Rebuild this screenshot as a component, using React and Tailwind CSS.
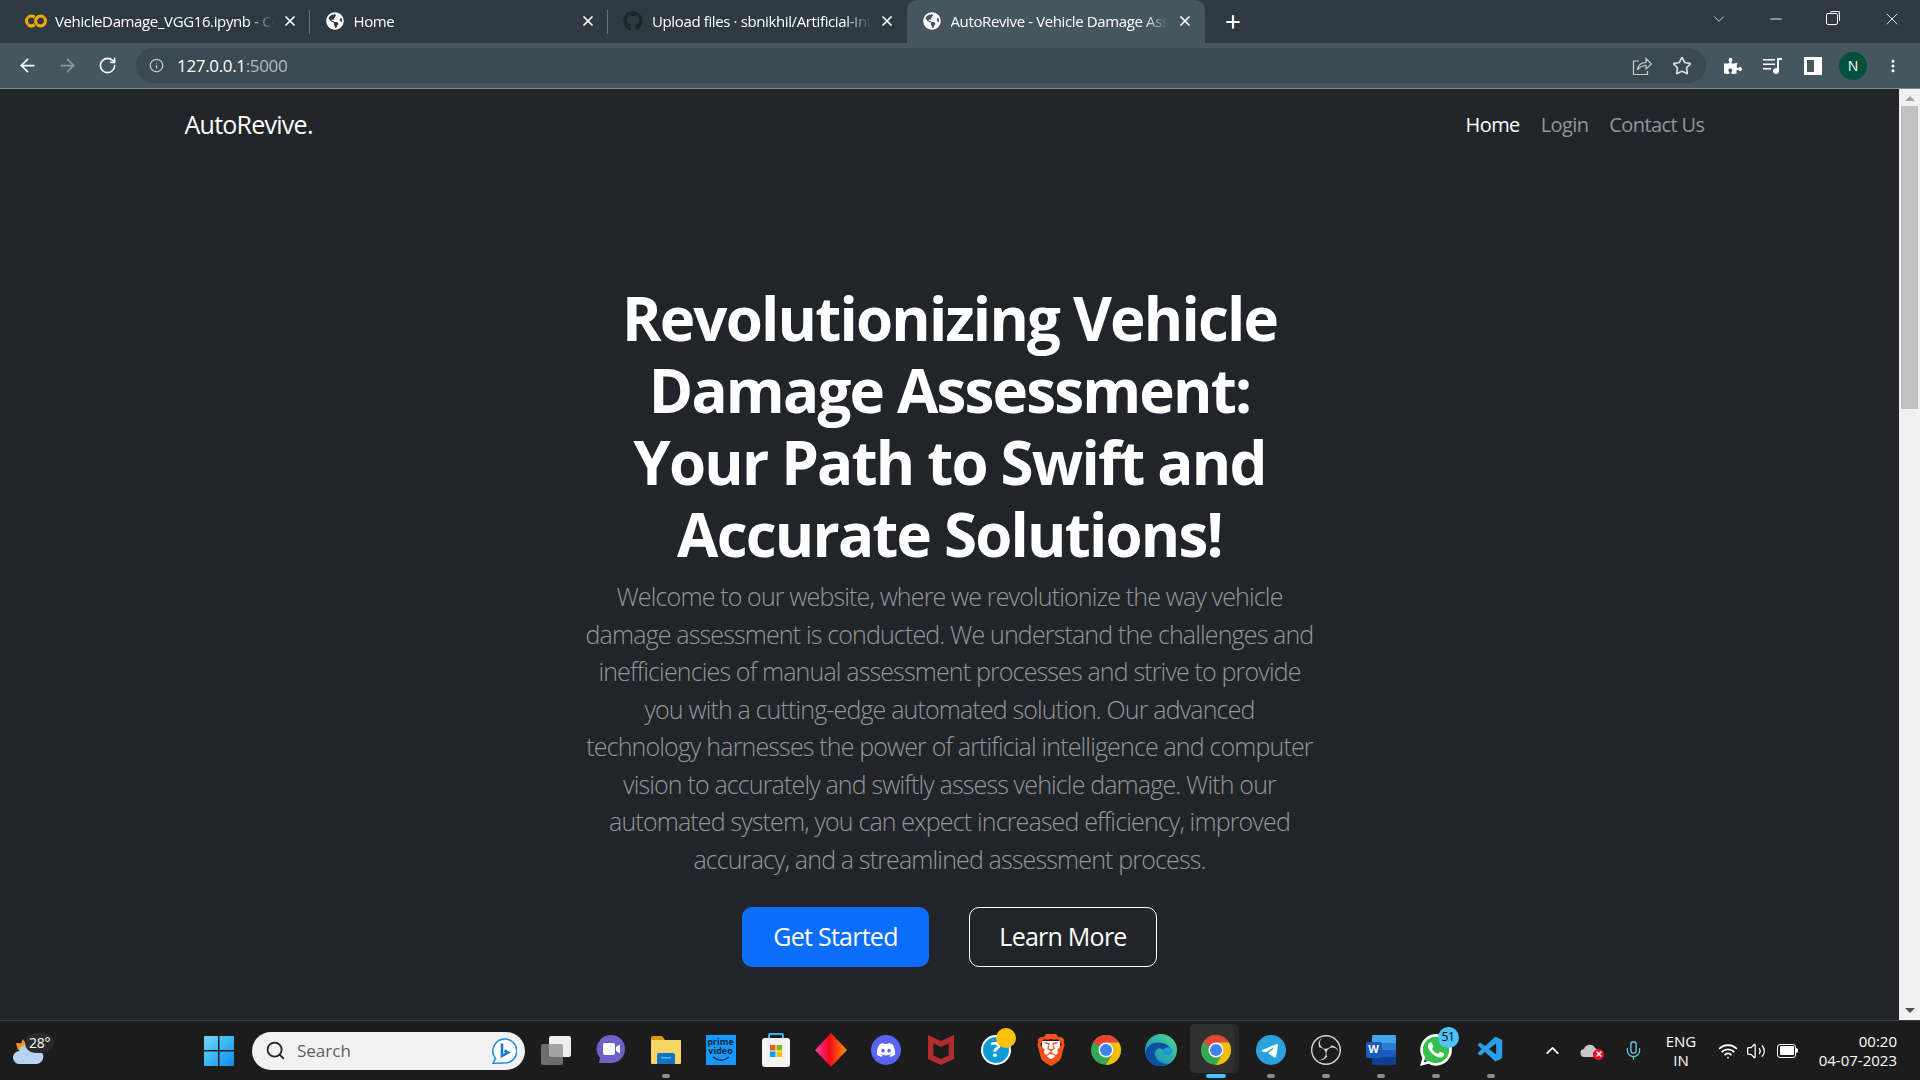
import React from 'react';
import { ArrowLeft, ArrowRight, RotateCw, Info, Star, X, Plus, ChevronDown, ChevronUp, Minus, Search, Mic, Wifi, Volume2, EllipsisVertical } from 'lucide-react';
import { FaGithub, FaGlobeAmericas, FaDiscord, FaPuzzlePiece } from 'react-icons/fa';
import { SiGooglecolab, SiBrave, SiMcafee, SiObsstudio, SiTelegram, SiWhatsapp } from 'react-icons/si';
import { VscVscode } from 'react-icons/vsc';

const tabs = [
  { id: 'colab', title: 'VehicleDamage_VGG16.ipynb - Colab' },
  { id: 'home', title: 'Home' },
  { id: 'github', title: 'Upload files · sbnikhil/Artificial-Intelligence' },
  { id: 'active', title: 'AutoRevive - Vehicle Damage Assessment', active: true },
];

const headingLines = [
  'Revolutionizing Vehicle',
  'Damage Assessment:',
  'Your Path to Swift and',
  'Accurate Solutions!',
];

const bodyLines = [
  'Welcome to our website, where we revolutionize the way vehicle',
  'damage assessment is conducted. We understand the challenges and',
  'inefficiencies of manual assessment processes and strive to provide',
  'you with a cutting-edge automated solution. Our advanced',
  'technology harnesses the power of artificial intelligence and computer',
  'vision to accurately and swiftly assess vehicle damage. With our',
  'automated system, you can expect increased efficiency, improved',
  'accuracy, and a streamlined assessment process.',
];

const TabIcon = ({ id }) => {
  if (id === 'colab') return <SiGooglecolab size={22} color="#f9ab00" />;
  if (id === 'github') return <FaGithub size={20} color="#1c252b" />;
  return <FaGlobeAmericas size={18} color="#ffffff" />;
};

const Tab = ({ tab }) => (
  <div
    className={`flex h-[43px] w-[298.5px] shrink-0 items-center pb-[1px] pl-[13px] pr-[12px] ${
      tab.active ? 'rounded-t-[10px] bg-[#46565f]' : ''
    }`}
  >
    <span className="flex w-[24px] shrink-0 items-center justify-center">
      <TabIcon id={tab.id} />
    </span>
    <span className="ml-[7px] flex-1 overflow-hidden whitespace-nowrap text-[15px] tracking-[-0.025em] text-white [mask-image:linear-gradient(to_right,black_88%,transparent)]">
      {tab.title}
    </span>
    <X size={16} strokeWidth={2.6} color="#ffffff" className="ml-2 shrink-0" />
  </div>
);

const ChromeLogo = ({ size = 36 }) => (
  <svg width={size} height={size} viewBox="0 0 48 48">
    <circle cx="24" cy="24" r="20" fill="#34a853" />
    <path d="M24 4a20 20 0 0 1 17.32 10H24a10 10 0 0 0-8.66 5L6.68 14A20 20 0 0 1 24 4z" fill="#ea4335" />
    <path d="M41.32 14A20 20 0 0 1 24 44l8.66-15A10 10 0 0 0 24 14z" fill="#fbbc04" />
    <circle cx="24" cy="24" r="10" fill="#ffffff" />
    <circle cx="24" cy="24" r="8" fill="#3f83ee" />
  </svg>
);

const TaskIcon = ({ children, dot, active }) => (
  <div className="relative flex h-[56px] w-[55px] shrink-0 items-center justify-center pb-[2px]">
    {active && <span className="absolute top-[1px] left-[2px] h-[49px] w-[49px] rounded-[5px] bg-[#282828]" />}
    {active && <span className="absolute top-[1px] left-[2px] h-[49px] w-[44px] rounded-[5px] bg-[#303030]" />}
    <span className="relative flex items-center justify-center">{children}</span>
    {dot && <span className="absolute bottom-[1px] h-[4px] w-[8px] rounded-full bg-[#8c8c8c]" />}
    {active && <span className="absolute bottom-[1px] h-[4px] w-[20px] rounded-full bg-[#4cc2ff]" />}
  </div>
);

const WindowsLogo = () => (
  <svg width="30" height="30" viewBox="0 0 30 30">
    <defs>
      <linearGradient id="winBlue" x1="0" y1="0" x2="1" y2="1">
        <stop offset="0" stopColor="#6fdcfb" />
        <stop offset="1" stopColor="#0b8bf0" />
      </linearGradient>
    </defs>
    <path d="M0 1a1 1 0 0 1 1-1h13v14H0zM15.5 0H29a1 1 0 0 1 1 1v13H15.5zM0 15.5h14V30H1a1 1 0 0 1-1-1zM15.5 15.5H30V29a1 1 0 0 1-1 1H15.5z" fill="url(#winBlue)" />
  </svg>
);

const BingIcon = () => (
  <svg width="26" height="26" viewBox="0 0 26 26">
    <path d="M14 1a12 12 0 0 1 2 23.800L2 25.500l2.500-5A12 12 0 0 1 14 1z" fill="#ffffff" stroke="#1e8fe6" strokeWidth="1.6" />
    <path d="M11 5.500v12.500l6-3.500-3.500-2" fill="none" stroke="#1878d8" strokeWidth="2.6" />
  </svg>
);

const TaskViewIcon = () => (
  <svg width="32" height="30" viewBox="0 0 32 30">
    <rect x="9" y="1" width="22" height="21" rx="2" fill="#eeeeee" />
    <rect x="1" y="9" width="22" height="21" rx="2" fill="#8a8a8a" fillOpacity="0.75" />
  </svg>
);

const MeetIcon = () => (
  <svg width="30" height="32" viewBox="0 0 30 32">
    <path d="M15 1a14 14 0 0 1 0 28H3l1-5A14 14 0 0 1 15 1z" fill="#6e62c9" />
    <rect x="7" y="9" width="12" height="12" rx="2" fill="#ffffff" />
    <path d="M20 13l4-2.500v9L20 17z" fill="#ffffff" />
  </svg>
);

const FolderIcon = () => (
  <svg width="32" height="30" viewBox="0 0 32 30">
    <path d="M1 3a2 2 0 0 1 2-2h9l3 4h15a1 1 0 0 1 1 1v3H1z" fill="#d99a0c" />
    <rect x="1" y="5" width="30" height="24" rx="1" fill="#f7d668" />
    <path d="M7 20a2 2 0 0 1 2-2h14a2 2 0 0 1 2 2v9H7z" fill="#0f74c4" />
    <rect x="11" y="22" width="10" height="1.500" fill="#5fb2ee" />
  </svg>
);

const PrimeVideo = () => (
  <div className="flex h-[30px] w-[30px] flex-col items-center bg-[#1399ff] pt-[2px] font-['Open_Sans',sans-serif] text-[9px] leading-[9px] font-bold text-[#10273d]">
    <span>prime</span>
    <span>video</span>
    <svg width="18" height="6" viewBox="0 0 18 6" className="mt-[1px]">
      <path d="M1 1c5 4 11 4 16 0" fill="none" stroke="#10273d" strokeWidth="1.400" />
    </svg>
  </div>
);

const StoreIcon = () => (
  <svg width="30" height="36" viewBox="0 0 30 36">
    <path d="M8 8V3a1 1 0 0 1 1-1h12a1 1 0 0 1 1 1v5" fill="none" stroke="#2eb4ee" strokeWidth="2" />
    <rect x="1" y="6" width="28" height="29" rx="3" fill="#f3f3f3" />
    <rect x="9" y="13" width="5.500" height="5.500" fill="#ef5a24" />
    <rect x="15.500" y="13" width="5.500" height="5.500" fill="#7fba00" />
    <rect x="9" y="19.500" width="5.500" height="5.500" fill="#00a4ef" />
    <rect x="15.500" y="19.500" width="5.500" height="5.500" fill="#ffb900" />
  </svg>
);

const DiamondIcon = () => (
  <svg width="32" height="34" viewBox="0 0 32 34">
    <defs>
      <linearGradient id="diamondFill" x1="0" y1="0" x2="1" y2="0">
        <stop offset="0" stopColor="#f23aa8" />
        <stop offset="0.45" stopColor="#f2071c" />
        <stop offset="1" stopColor="#ff9500" />
      </linearGradient>
    </defs>
    <polygon points="16,0 32,17 16,34 0,17" fill="url(#diamondFill)" />
  </svg>
);

const HelpIcon = () => (
  <div className="relative flex h-[30px] w-[30px] items-center justify-center rounded-full border-2 border-white bg-[#0f9bd7] font-['Open_Sans',sans-serif] text-[21px] font-bold text-white">
    ?
    <span className="absolute top-[-9px] right-[-7px] h-[20px] w-[20px] rounded-full bg-[#ffc20e]" />
  </div>
);

const EdgeIcon = () => (
  <svg width="32" height="32" viewBox="0 0 32 32">
    <defs>
      <linearGradient id="edgeTop" x1="0" y1="1" x2="1" y2="0">
        <stop offset="0" stopColor="#0c7ccd" />
        <stop offset="1" stopColor="#52dc8e" />
      </linearGradient>
    </defs>
    <circle cx="16" cy="16" r="16" fill="url(#edgeTop)" />
    <path d="M1 17C3 7 20 5 26 15c2 3 0 6-4 6-3 0-2-3-4-5-3-3-9-1-8 5 1 5 6 9 13 9-3 2-7 2-10 2C6 32 0 25 1 17z" fill="#0b4f9e" />
    <path d="M18 16c2 2 1 5 4 5 3 0 6-2 4-6-2-3-6-2-8 1z" fill="#1f9bd4" />
  </svg>
);

const WordIcon = () => (
  <div className="relative h-[30px] w-[30px]">
    <svg width="30" height="30" viewBox="0 0 30 30">
      <path d="M6 1a1 1 0 0 1 1-1h22a1 1 0 0 1 1 1v7H6z" fill="#41a5ee" />
      <rect x="6" y="8" width="24" height="7" fill="#2b7cd3" />
      <rect x="6" y="15" width="24" height="7" fill="#185abd" />
      <path d="M6 22h24v7a1 1 0 0 1-1 1H7a1 1 0 0 1-1-1z" fill="#103f91" />
    </svg>
    <span className="absolute top-[7px] left-0 flex h-[16px] w-[16px] items-center justify-center rounded-[2px] bg-[#185abd] font-['Open_Sans',sans-serif] text-[11px] font-bold text-white">
      W
    </span>
  </div>
);

const WeatherIcon = () => (
  <div className="relative h-[34px] w-[42px]">
    <svg width="32" height="26" viewBox="0 0 32 26" className="mt-[10px]">
      <path d="M4 4l5 .5L11 0l3 5 4 2-4 6-8-2z" fill="#f59a23" />
      <path d="M8 25a6.500 6.500 0 0 1-1-13 8.500 8.500 0 0 1 15.500-2 7.500 7.500 0 0 1 2.500 15z" fill="#b6d4f2" />
    </svg>
    <span className="absolute top-[-6px] left-[13px] rounded-full bg-[#2a2a2a] px-[4px] text-[14px] leading-[20px] tracking-[-0.02em] text-white">28°</span>
  </div>
);

const OneDriveError = () => (
  <div className="relative h-[18px] w-[24px]">
    <svg width="20" height="16" viewBox="0 0 20 16">
      <path d="M5 15a4 4 0 0 1-1-8 6 6 0 0 1 11-1 5 5 0 0 1 1 9z" fill="#c8c8c8" />
    </svg>
    <span className="absolute right-0 bottom-0 flex h-[11px] w-[11px] items-center justify-center rounded-full bg-[#e81123]">
      <X size={8} strokeWidth={4} color="#ffffff" />
    </span>
  </div>
);

const BatteryIcon = () => (
  <div className="flex items-center">
    <div className="flex h-[14px] w-[19px] items-center rounded-[3px] border-[1.5px] border-white p-[1.5px]">
      <div className="h-full w-full rounded-[1px] bg-white" />
    </div>
    <div className="h-[5px] w-[2px] rounded-r bg-white" />
  </div>
);

const SidePanelIcon = () => (
  <svg width="18" height="18" viewBox="0 0 18 18">
    <path d="M0 0h18v18H0zM3 3v12h7V3z" fill="#ffffff" fillRule="evenodd" />
  </svg>
);

const MediaIcon = () => (
  <svg width="20" height="18" viewBox="0 0 20 18">
    <path d="M0 2h12v1.600H0zM0 6.500h12v1.600H0zM0 11h8v1.600H0z" fill="#ffffff" />
    <path d="M14 1h5v2h-3v11a3 3 0 1 1-2-2.800z" fill="#ffffff" />
  </svg>
);

const ShareIcon = () => (
  <svg width="20" height="20" viewBox="0 0 20 20" fill="none" stroke="#c5cbcf" strokeWidth="1.200">
    <path d="M7 5H1.500v13.500h14V15" />
    <path d="M5.500 14c.5-5 4-7.500 8.500-7.500V2.500l5.500 5.500-5.500 5V9.500c-4 0-6.500 1.500-8.500 4.500z" />
  </svg>
);

const App = () => (
  <div className="flex h-[1080px] w-[1920px] flex-col overflow-hidden bg-[#212529] font-['Open_Sans',sans-serif]">
    {/* tab strip */}
    <div className="flex h-[43px] shrink-0 items-center bg-[#2e3a42] pl-[11px]">
      {tabs.map((tab, i) => (
        <React.Fragment key={tab.id}>
          <Tab tab={tab} />
          {i < 2 && <span className="ml-[-1px] h-[24px] w-px shrink-0 bg-[#6c767d]" />}
        </React.Fragment>
      ))}
      <Plus size={20} strokeWidth={2.6} color="#ffffff" className="ml-[18px] shrink-0" />
      <div className="mb-[6px] ml-auto flex items-center">
        <span className="flex w-[57px] justify-center"><ChevronDown size={18} strokeWidth={1} color="#ffffff" /></span>
        <span className="flex w-[56px] justify-center"><Minus size={18} strokeWidth={1.2} color="#ffffff" /></span>
        <span className="mr-[2.5px] flex w-[57px] justify-center">
          <span className="relative h-[12px] w-[12px] rounded-[2px] border border-white">
            <span className="absolute top-[-3px] right-[-3px] h-[10px] w-[10px] rounded-t-[2px] border-t border-r border-white" />
          </span>
        </span>
        <span className="flex w-[57px] justify-center"><X size={20} strokeWidth={1} color="#ffffff" /></span>
      </div>
    </div>

    {/* toolbar */}
    <div className="flex h-[46px] shrink-0 items-center border-b border-[#7d8a91] bg-[#46565f]">
      <span className="flex w-[54px] justify-center"><ArrowLeft size={21} strokeWidth={2} color="#ffffff" /></span>
      <span className="ml-[-14px] flex w-[54px] justify-center"><ArrowRight size={21} strokeWidth={2} color="#8d979d" /></span>
      <span className="ml-[-14px] flex w-[54px] justify-center"><RotateCw size={19} strokeWidth={2} color="#ffffff" /></span>
      <div className="ml-[2px] flex h-[35px] w-[1570px] items-center rounded-full bg-[#3b4951] pl-[13px] pr-[14px]">
        <Info size={15} strokeWidth={2} color="#c5cbcf" />
        <span className="ml-[13px] text-[17px] tracking-[-0.02em] text-white">
          127.0.0.1<span className="text-[#b4bbc0]">:5000</span>
        </span>
        <span className="ml-auto"><ShareIcon /></span>
        <Star size={20} strokeWidth={2} color="#d6dadd" className="ml-[20px]" />
      </div>
      <span className="ml-[17px] flex w-[20px] justify-center"><FaPuzzlePiece size={18} color="#ffffff" /></span>
      <span className="ml-[20px] flex w-[20px] justify-center"><MediaIcon /></span>
      <span className="ml-[20px] flex w-[20px] justify-center"><SidePanelIcon /></span>
      <span className="ml-[16px] flex h-[28px] w-[28px] items-center justify-center rounded-full bg-[#03503f] text-[14px] text-white">N</span>
      <span className="ml-[18px] flex w-[16px] justify-center"><EllipsisVertical size={20} strokeWidth={2.6} color="#ffffff" /></span>
    </div>

    {/* page + scrollbar */}
    <div className="flex min-h-0 flex-1">
      <main className="flex min-w-0 flex-1 flex-col items-center">
        <nav className="mr-[10px] flex w-[1520px] items-center justify-between pt-[18px]">
          <span className="mt-[-2px] text-[25px] leading-[36px] tracking-[-0.03em] text-white">AutoRevive.</span>
          <div className="flex gap-[21px] text-[20px] leading-[36px] tracking-[-0.03em] text-[#90969b]">
            <span className="font-medium text-white">Home</span>
            <span>Login</span>
            <span>Contact Us</span>
          </div>
        </nav>

        <h1 className="mt-[139px] text-center text-[60px] leading-[72px] font-bold tracking-[-0.03em] text-white">
          {headingLines.map((line) => (
            <span key={line} className="block whitespace-nowrap">{line}</span>
          ))}
        </h1>
        <p className="mt-[8px] text-center text-[25px] leading-[37.5px] font-light tracking-[-0.034em] text-[#94979a]">
          {bodyLines.map((line) => (
            <span key={line} className="block whitespace-nowrap">{line}</span>
          ))}
        </p>
        <div className="mt-[29px] flex gap-[40px]">
          <button className="h-[60px] w-[187px] rounded-[10px] bg-[#0d6efd] text-[25px] tracking-[-0.03em] text-white">Get Started</button>
          <button className="h-[60px] w-[188px] rounded-[10px] border border-white text-[25px] tracking-[-0.03em] text-white">Learn More</button>
        </div>
      </main>

      <div className="flex w-[21px] shrink-0 flex-col items-center bg-[#f1f1f1]">
        <span className="mt-[7px] h-0 w-0 border-x-[5px] border-b-[5px] border-x-transparent border-b-[#a3a3a3]" />
        <span className="mt-[5px] h-[303px] w-[17px] bg-[#c1c1c1]" />
        <span className="mt-auto mb-[7px] h-0 w-0 border-x-[5px] border-t-[5px] border-x-transparent border-t-[#505050]" />
      </div>
    </div>

    {/* taskbar */}
    <footer className="flex h-[60px] shrink-0 items-center border-t border-[#3a3a3a] bg-[#1c1c1c] text-white">
      <div className="ml-[12px] w-[183px] shrink-0"><WeatherIcon /></div>
      <div className="flex w-[48px] shrink-0 justify-center"><WindowsLogo /></div>
      <div className="ml-[9px] flex h-[38px] w-[273px] shrink-0 items-center rounded-full bg-[#f2f2f2] pl-[13px] pr-[8px] text-[#5f5f5f]">
        <Search size={21} strokeWidth={2} color="#222222" />
        <span className="ml-[11px] text-[17px]">Search</span>
        <span className="ml-auto"><BingIcon /></span>
      </div>
      <div className="ml-[3px] flex">
        <TaskIcon><TaskViewIcon /></TaskIcon>
        <TaskIcon><MeetIcon /></TaskIcon>
        <TaskIcon dot><FolderIcon /></TaskIcon>
        <TaskIcon><PrimeVideo /></TaskIcon>
        <TaskIcon><StoreIcon /></TaskIcon>
        <TaskIcon><DiamondIcon /></TaskIcon>
        <TaskIcon>
          <span className="flex h-[30px] w-[30px] items-center justify-center rounded-full bg-[#5865f2]"><FaDiscord size={20} color="#ffffff" /></span>
        </TaskIcon>
        <TaskIcon><SiMcafee size={30} color="#b32d2d" /></TaskIcon>
        <TaskIcon><HelpIcon /></TaskIcon>
        <TaskIcon>
          <span className="relative flex items-center justify-center">
            <span className="absolute h-[18px] w-[18px] bg-white" />
            <SiBrave size={32} color="#f4511e" className="relative" />
          </span>
        </TaskIcon>
        <TaskIcon><ChromeLogo /></TaskIcon>
        <TaskIcon><EdgeIcon /></TaskIcon>
        <TaskIcon active><ChromeLogo /></TaskIcon>
        <TaskIcon dot>
          <span className="flex h-[28px] w-[28px] items-center justify-center rounded-full bg-white"><SiTelegram size={30} color="#2aa3dc" className="shrink-0" /></span>
        </TaskIcon>
        <TaskIcon dot><SiObsstudio size={30} color="#d8d8d8" /></TaskIcon>
        <TaskIcon dot><WordIcon /></TaskIcon>
        <TaskIcon dot>
          <span className="relative flex h-[30px] w-[30px] items-center justify-center rounded-full bg-[#35c04a]">
            <SiWhatsapp size={32} color="#ffffff" className="shrink-0" />
            <span className="absolute top-[-8px] right-[-8px] flex h-[21px] w-[21px] items-center justify-center rounded-full bg-[#4cc2ff] text-[12px] tracking-[-0.02em] text-black">51</span>
          </span>
        </TaskIcon>
        <TaskIcon dot><VscVscode size={30} color="#2a9fe8" /></TaskIcon>
      </div>
      <ChevronUp size={21} strokeWidth={2} color="#ffffff" className="ml-[24px]" />
      <span className="ml-[17px]"><OneDriveError /></span>
      <Mic size={21} strokeWidth={1.500} color="#6fc6de" className="ml-[19px]" />
      <div className="ml-[13px] w-[48px] text-center text-[15px] leading-[19px]">
        <div>ENG</div>
        <div>IN</div>
      </div>
      <Wifi size={20} strokeWidth={2.2} color="#ffffff" className="ml-[13px]" />
      <Volume2 size={20} strokeWidth={1.500} color="#ffffff" className="ml-[8px]" />
      <span className="ml-[11px]"><BatteryIcon /></span>
      <div className="ml-[19px] w-[80px] text-right text-[15px] leading-[19px]">
        <div>00:20</div>
        <div>04-07-2023</div>
      </div>
    </footer>
  </div>
);

export default App;
